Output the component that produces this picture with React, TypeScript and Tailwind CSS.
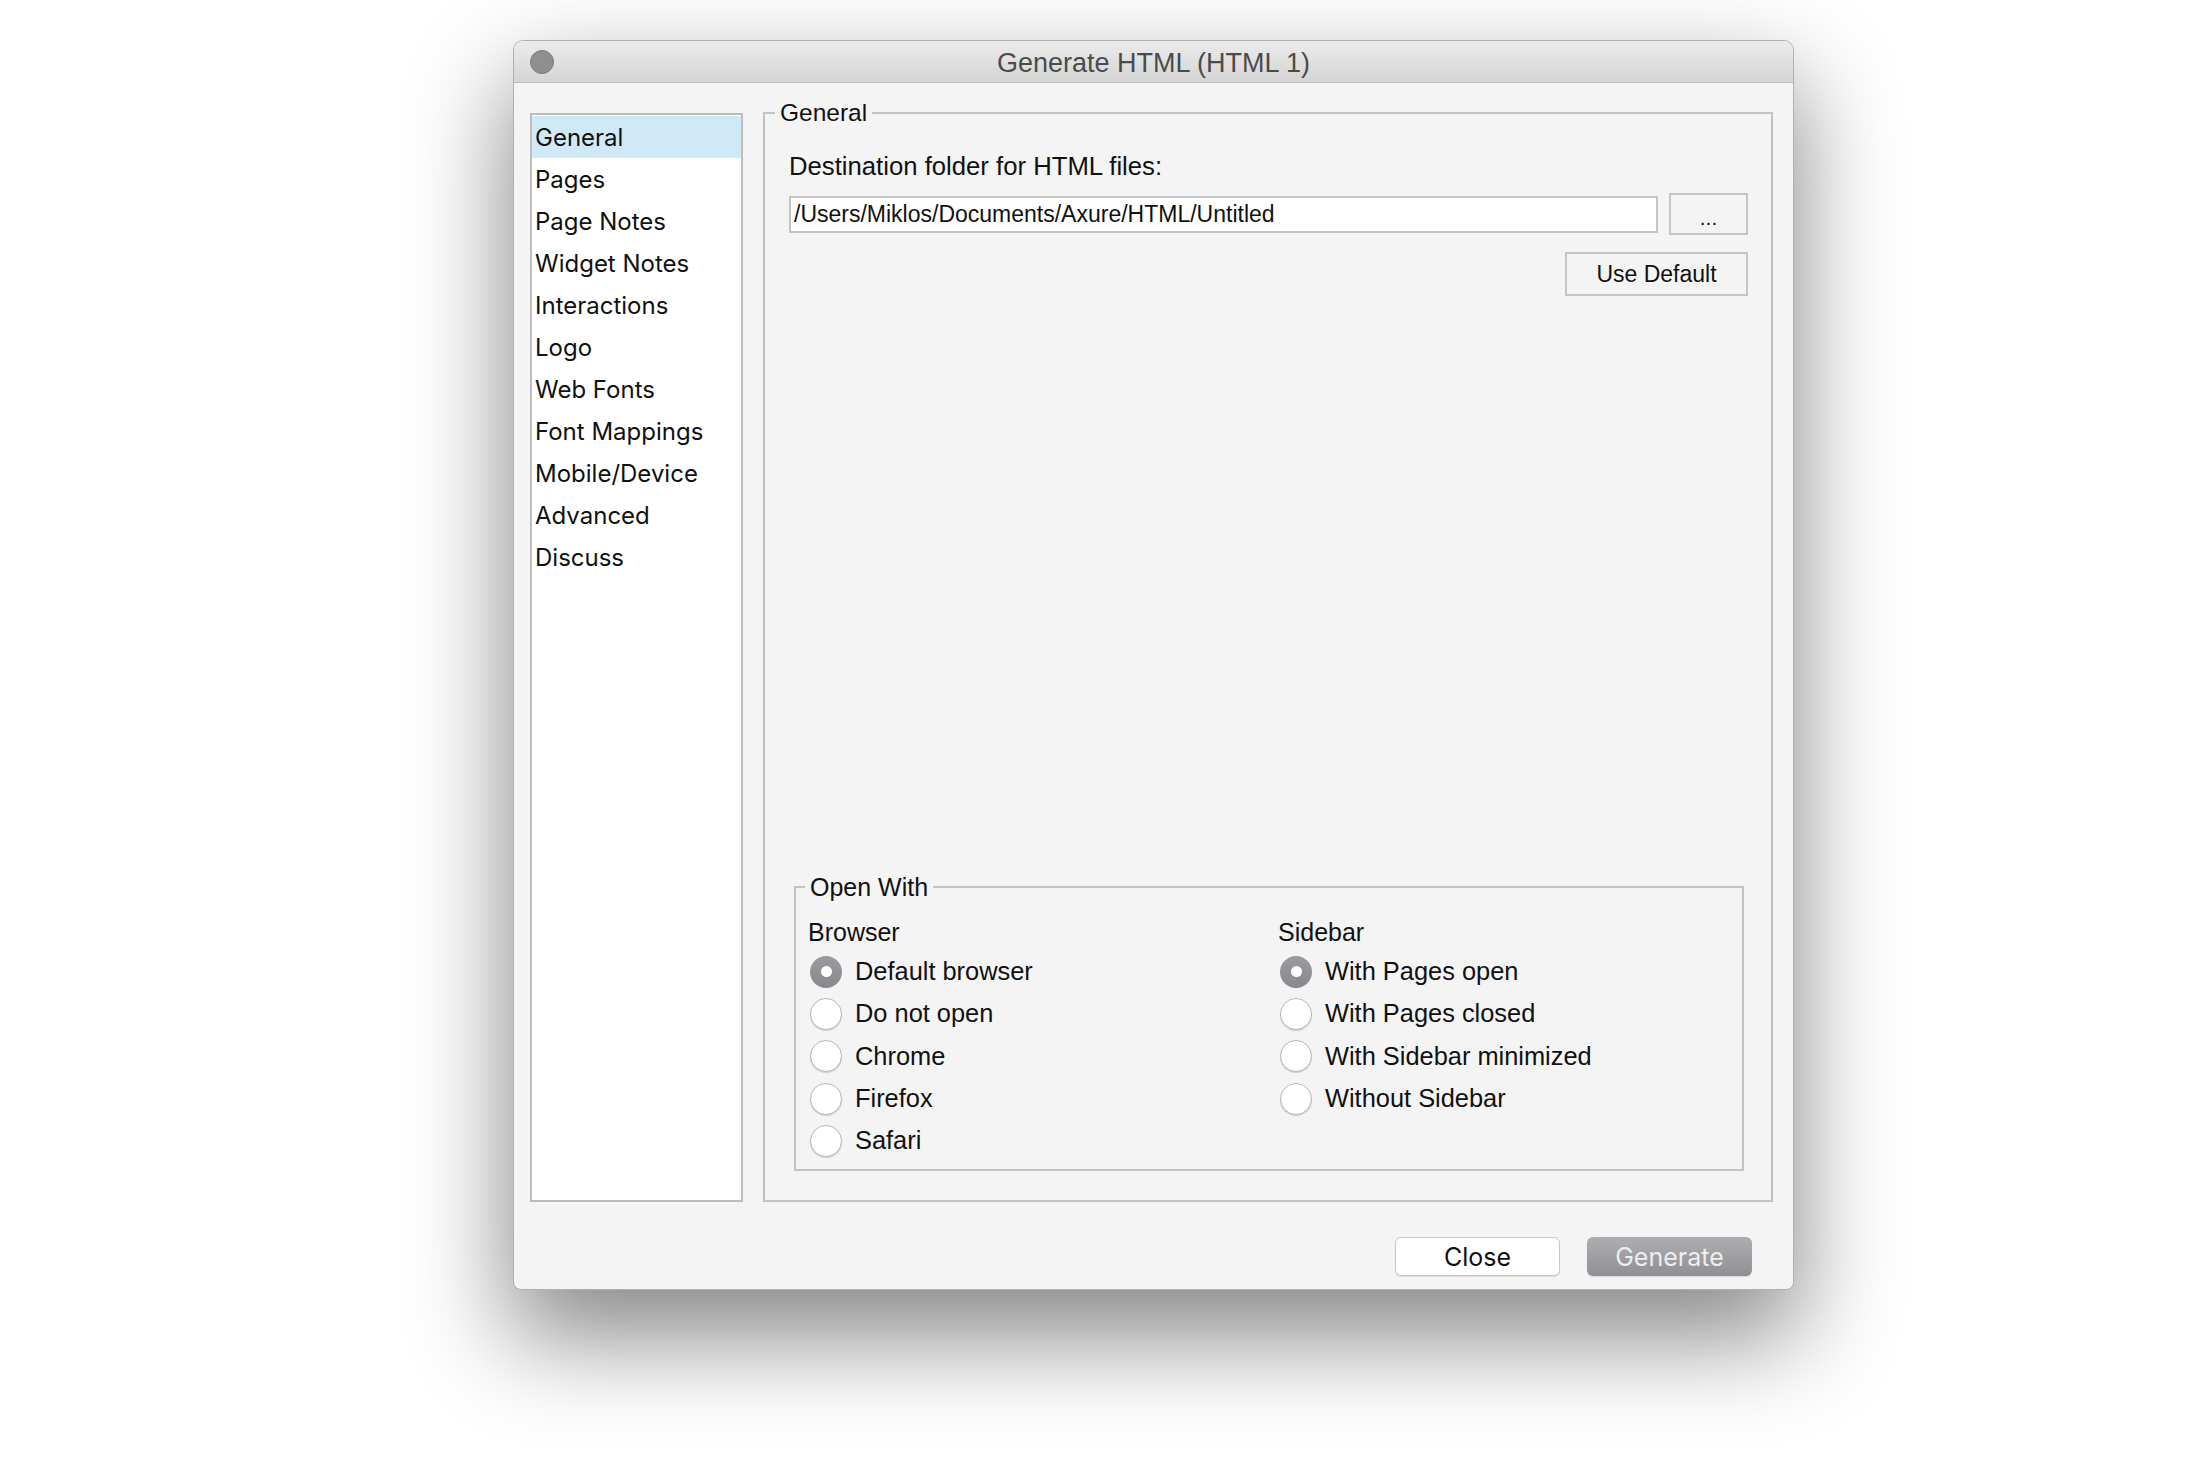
import React from "react";

const HN = { fontFamily: '"Liberation Sans", Arial, sans-serif' };
const SF = { fontFamily: 'Inter, "Noto Sans", sans-serif' };

function Radio({ checked }: { checked?: boolean }) {
  if (checked) {
    return (
      <span className="w-[32px] h-[32px] shrink-0 rounded-full bg-gradient-to-b from-[#9a9a9f] to-[#88888d] flex items-center justify-center">
        <span className="w-[11px] h-[11px] rounded-full bg-white" />
      </span>
    );
  }
  return (
    <span className="w-[32px] h-[32px] shrink-0 rounded-full bg-white border border-[#b9b9b9] shadow-[0_1px_1px_rgba(0,0,0,0.16)]" />
  );
}

function RadioRow({ label, checked }: { label: string; checked?: boolean }) {
  return (
    <div className="h-[42.3px] flex items-center">
      <span className="ml-[2px] flex">
        <Radio checked={checked} />
      </span>
      <span className="ml-[13px] text-[25.4px] text-[#111] leading-none" style={HN}>
        {label}
      </span>
    </div>
  );
}

const sideItems = [
  "General",
  "Pages",
  "Page Notes",
  "Widget Notes",
  "Interactions",
  "Logo",
  "Web Fonts",
  "Font Mappings",
  "Mobile/Device",
  "Advanced",
  "Discuss",
];

export default function App() {
  return (
    <div className="min-h-screen w-full bg-white pl-[513px] pt-[40px]">
      <div className="w-[1281px] h-[1250px] rounded-t-[10px] rounded-b-[8px] bg-[#f4f4f4] border border-[#b0b0b0] shadow-[0_44px_100px_4px_rgba(0,0,0,0.47)] flex flex-col overflow-hidden">
        {/* Title bar */}
        <div className="h-[42px] shrink-0 flex items-center bg-gradient-to-b from-[#ececec] to-[#d4d4d4] border-b border-[#bdbdbd]">
          <div className="w-[60px] flex items-center pl-[16px] pt-[1px]">
            <span className="w-[24px] h-[24px] rounded-full bg-[#8f8f8f] border border-[#7a7a7a]" />
          </div>
          <div className="flex-1 text-center text-[27px] text-[#4b4b4b] leading-none pt-[3px]" style={HN}>
            Generate HTML (HTML 1)
          </div>
          <div className="w-[60px]" />
        </div>

        {/* Body */}
        <div className="flex-1 flex flex-col pt-[30px] pl-[16px] pr-[20px]">
          <div className="flex h-[1089px] gap-[20px] items-start">
            {/* Sidebar list */}
            <div className="w-[213px] h-[1089px] shrink-0 bg-white border-2 border-[#bdbdbd] pt-[1px]" style={SF}>
              {sideItems.map((s, i) => (
                <div
                  key={s}
                  className={
                    "h-[42px] flex items-center pl-[3px] pt-[2px] text-[24px] text-[#111] leading-none " +
                    (i === 0 ? "bg-[#cfeaf6]" : "")
                  }
                >
                  {s}
                </div>
              ))}
            </div>

            {/* General group */}
            <fieldset className="flex-1 -mt-[14px] h-[1103px] border-2 border-[#c2c2c2] p-0 m-0 min-w-0 flex flex-col">
              <legend className="ml-[10px] px-[5px] h-[28px] text-[24.5px] leading-[28px] text-[#111]" style={HN}>
                General
              </legend>
              <div className="flex-1 flex flex-col pt-[25px] pl-[24px] pr-[23px] pb-[29px]">
                <div className="h-[30px] flex items-center text-[25.7px] text-[#111] leading-none" style={HN}>
                  Destination folder for HTML files:
                </div>
                <div className="mt-[11px] flex items-center gap-[11px]">
                  <div className="flex-1 h-[37px] bg-white border-2 border-[#c4c4c4] flex items-center pl-[3px] text-[23px] text-[#111] leading-none" style={HN}>
                    /Users/Miklos/Documents/Axure/HTML/Untitled
                  </div>
                  <div className="w-[79px] h-[42px] border-2 border-[#c4c4c4] bg-[#f4f4f4] flex items-center justify-center text-[21px] text-[#111] leading-none pt-[6px]" style={HN}>
                    ...
                  </div>
                </div>
                <div className="mt-[17px] flex justify-end">
                  <div className="w-[183px] h-[44px] border-2 border-[#c4c4c4] bg-[#f4f4f4] flex items-center justify-center text-[23px] text-[#111] leading-none" style={HN}>
                    Use Default
                  </div>
                </div>

                {/* Open With group */}
                <fieldset className="mt-auto ml-[5px] mr-[4px] border-2 border-[#c2c2c2] p-0 m-0 min-w-0">
                  <legend className="ml-[9px] px-[5px] h-[28px] text-[25px] leading-[28px] text-[#111]" style={HN}>
                    Open With
                  </legend>
                  <div className="grid grid-cols-[470px_1fr] pl-[12px] pt-[16px] pb-[7px]">
                    <div className="flex flex-col">
                      <div className="h-[33.5px] text-[25px] leading-[30px] text-[#111]" style={HN}>
                        Browser
                      </div>
                      <RadioRow label="Default browser" checked />
                      <RadioRow label="Do not open" />
                      <RadioRow label="Chrome" />
                      <RadioRow label="Firefox" />
                      <RadioRow label="Safari" />
                    </div>
                    <div className="flex flex-col">
                      <div className="h-[33.5px] text-[25px] leading-[30px] text-[#111]" style={HN}>
                        Sidebar
                      </div>
                      <RadioRow label="With Pages open" checked />
                      <RadioRow label="With Pages closed" />
                      <RadioRow label="With Sidebar minimized" />
                      <RadioRow label="Without Sidebar" />
                    </div>
                  </div>
                </fieldset>
              </div>
            </fieldset>
          </div>

          {/* Buttons */}
          <div className="mt-[35px] flex justify-end gap-[27px] pr-[21px]">
            <div className="w-[165px] h-[39px] rounded-[6px] bg-white border border-[#c8c8c8] shadow-[0_1px_1px_rgba(0,0,0,0.1)] flex items-center justify-center text-[25px] text-[#111] leading-none pt-[1px]" style={SF}>
              Close
            </div>
            <div className="w-[165px] h-[39px] rounded-[6px] bg-gradient-to-b from-[#adadb2] to-[#8f8f94] shadow-[0_1px_1px_rgba(0,0,0,0.12)] flex items-center justify-center text-[25px] text-[#eeeeee] leading-none pt-[1px]" style={SF}>
              Generate
            </div>
          </div>
        </div>
      </div>
    </div>
  );
}
